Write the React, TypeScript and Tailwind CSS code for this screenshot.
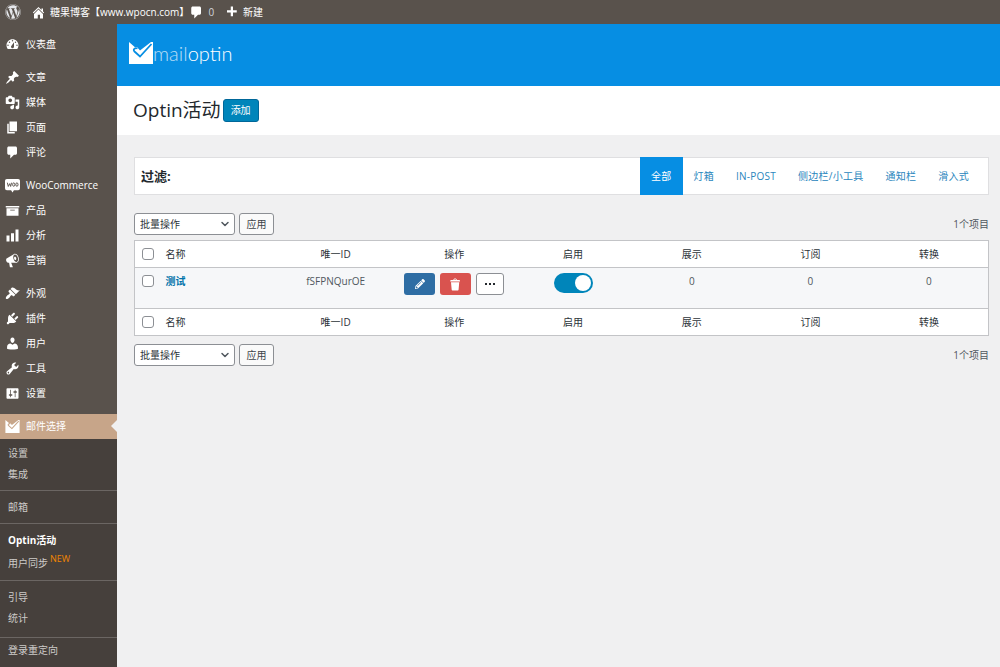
import { FaPencilAlt, FaWordpress } from 'react-icons/fa';
import { ChevronDown } from 'lucide-react';

const icons = {
  home: 'M16 8.5l1.53 1.53-1.06 1.06L10 4.6l-6.47 6.49-1.06-1.06L10 2.5l4 4v-2h2v4zm-6-2.46l6 5.99V18H12v-5H9v5H4v-5.97z',
  comments: 'M5 2h9c1.1 0 2 .9 2 2v7c0 1.1-.9 2-2 2h-2l-5 5v-5H5c-1.1 0-2-.9-2-2V4c0-1.1.9-2 2-2z',
  plus: 'M17 7v3h-5v5H9v-5H4V7h5V2h3v5h5z',
  dashboard:
    'M3.76 16h12.48c1.1-1.37 1.76-3.11 1.76-5 0-4.42-3.58-8-8-8s-8 3.58-8 8c0 1.89.66 3.63 1.76 5zM10 4c.55 0 1 .45 1 1s-.45 1-1 1-1-.45-1-1 .45-1 1-1zM6 6c.55 0 1 .45 1 1s-.45 1-1 1-1-.45-1-1 .45-1 1-1zm8 0c.55 0 1 .45 1 1s-.45 1-1 1-1-.45-1-1 .45-1 1-1zm-5.37 5.55L12 7v6c0 1.1-.9 2-2 2s-2-.9-2-2c0-.57.24-1.08.63-1.45zM4 10c.55 0 1 .45 1 1s-.45 1-1 1-1-.45-1-1 .45-1 1-1zm12 0c.55 0 1 .45 1 1s-.45 1-1 1-1-.45-1-1 .45-1 1-1z',
  post: 'M10.44 3.02l1.82-1.82 6.36 6.35-1.83 1.82c-1.05-.68-2.48-.57-3.41.36l-.75.75c-.92.93-1.04 2.35-.35 3.41l-1.83 1.82-2.41-2.41-2.8 2.79c-.42.42-3.38 2.71-3.8 2.29s1.86-3.39 2.28-3.81l2.79-2.79L4.1 9.36l1.83-1.82c1.05.69 2.48.57 3.4-.36l.75-.75c.93-.92 1.05-2.35.36-3.41z',
  media:
    'M13 11V4c0-.55-.45-1-1-1h-1.67L9 1H5L3.67 3H2c-.55 0-1 .45-1 1v7c0 .55.45 1 1 1h10c.55 0 1-.45 1-1zM7 4.5c1.38 0 2.5 1.12 2.5 2.5S8.38 9.5 7 9.5 4.5 8.38 4.5 7 5.62 4.5 7 4.5zM14 6h5v10.5c0 1.38-1.12 2.5-2.5 2.5S14 17.88 14 16.5s1.12-2.5 2.5-2.5c.17 0 .34.02.5.05V9h-3V6zm-4 8.05V13h2v3.5c0 1.38-1.12 2.5-2.5 2.5S7 17.88 7 16.5 8.12 14 9.5 14c.17 0 .34.02.5.05z',
  page: 'M6 15V2h10v13H6zm-1 1h8v2H3V5h2v11z',
  archive: 'M19 4v2H1V4h18zM2 7h16v10H2V7zm11 3V9H7v1h6z',
  chart: 'M18 18V2h-4v16h4zm-6 0V7H8v11h4zm-6 0v-8H2v8h4z',
  megaphone:
    'M18.15 5.94c.46 1.62.38 3.22-.02 4.48-.42 1.28-1.26 2.18-2.3 2.48-.16.06-.26.06-.4.06-.06.02-.12.02-.18.02-.06.02-.14.02-.22.02h-6.8l2.22 5.5c.02.14-.06.26-.14.34-.08.1-.24.16-.34.16H6.95c-.1 0-.26-.06-.34-.16-.08-.08-.16-.2-.14-.34l-1-5.5H4.25l-.02-.02c-.5.06-1.08-.18-1.54-.62s-.88-1.08-1.06-1.88c-.24-.8-.2-1.56-.02-2.2.18-.62.58-1.08 1.06-1.3l.02-.02 9-5.4c.1-.06.18-.1.24-.16.06-.04.14-.08.24-.12.16-.08.28-.12.5-.18 1.04-.3 2.24.1 3.22.98s1.84 2.24 2.26 3.86zm-2.58 5.98h-.02c.4-.1.74-.34 1.04-.7.58-.7.86-1.76.86-3.04 0-.64-.1-1.3-.28-1.98-.34-1.36-1.02-2.5-1.78-3.24s-1.68-1.1-2.46-.88c-.82.22-1.4.96-1.7 2-.32 1.04-.28 2.36.06 3.72.38 1.36 1 2.5 1.8 3.24.78.74 1.62 1.1 2.48.88zm-2.54-7.08c.22-.04.42-.02.62.04.38.16.76.48 1.02 1s.42 1.2.42 1.78c0 .3-.04.56-.12.8-.18.48-.44.84-.86.94-.34.1-.8-.06-1.14-.4s-.64-.86-.78-1.5c-.18-.62-.12-1.24.02-1.72s.48-.84.82-.94z',
  appearance:
    'M14.48 11.06L7.41 3.99l1.5-1.5c.5-.56 2.3-.47 3.51.32 1.21.8 1.43 1.28 2.91 2.1 1.18.64 2.45 1.26 4.45.85zm-.71.71L6.7 4.7 4.93 6.47c-.39.39-.39 1.02 0 1.41l1.06 1.06c.39.39.39 1.03 0 1.42-.6.6-1.43 1.11-2.21 1.69-.35.26-.7.53-1.01.84C1.43 14.23.4 16.08 1.4 17.07c.99 1 2.84-.03 4.18-1.36.31-.31.58-.66.85-1.02.57-.78 1.08-1.61 1.69-2.21.39-.39 1.02-.39 1.41 0l1.06 1.06c.39.39 1.02.39 1.41 0z',
  plugins:
    'M13.11 4.36L9.87 7.6 8 5.73l3.24-3.24c.35-.34 1.05-.2 1.56.32.52.51.66 1.21.31 1.55zm-8 1.77l.91-1.12 9.01 9.01-1.19.84c-.71.71-2.63 1.16-3.82 1.16H6.14L4.9 17.26c-.59.59-1.54.59-2.12 0-.59-.58-.59-1.53 0-2.12l1.24-1.24v-3.88c0-1.13.4-3.19 1.09-3.89zm7.26 3.97l3.24-3.24c.34-.35 1.04-.21 1.55.31.52.51.66 1.21.31 1.55l-3.24 3.25z',
  users:
    'M10 9.25c-2.27 0-2.73-3.44-2.73-3.44C7 4.02 7.82 2 9.97 2c2.16 0 2.98 2.02 2.71 3.81 0 0-.41 3.44-2.68 3.44zm0 2.57L12.72 10c2.39 0 4.52 2.33 4.52 4.53v2.49s-3.65 1.13-7.24 1.13c-3.65 0-7.24-1.13-7.24-1.13v-2.49c0-2.25 1.94-4.48 4.47-4.48z',
  tools:
    'M16.68 9.77c-1.34 1.34-3.3 1.67-4.95.99l-5.41 6.52c-.99.99-2.59.99-3.58 0s-.99-2.59 0-3.57l6.52-5.42c-.68-1.65-.35-3.61.99-4.95 1.28-1.28 3.12-1.62 4.72-1.06l-2.89 2.89 2.82 2.82 2.86-2.87c.53 1.58.18 3.39-1.08 4.65zM3.81 16.21c.4.39 1.04.39 1.43 0 .4-.4.4-1.04 0-1.43-.39-.4-1.03-.4-1.43 0-.39.39-.39 1.03 0 1.43z',
  settings:
    'M18 16V4c0-.55-.45-1-1-1H3c-.55 0-1 .45-1 1v12c0 .55.45 1 1 1h14c.55 0 1-.45 1-1zM8 11h1c.55 0 1 .45 1 1s-.45 1-1 1H8v1.5c0 .28-.22.5-.5.5s-.5-.22-.5-.5V13H6c-.55 0-1-.45-1-1s.45-1 1-1h1V5.5c0-.28.22-.5.5-.5s.5.22.5.5V11zm5-2h-1c-.55 0-1-.45-1-1s.45-1 1-1h1V5.5c0-.28.22-.5.5-.5s.5.22.5.5V7h1c.55 0 1 .45 1 1s-.45 1-1 1h-1v5.5c0 .28-.22.5-.5.5s-.5-.22-.5-.5V9z',
  trash:
    'M12 4h3c.6 0 1 .4 1 1v1H3V5c0-.6.5-1 1-1h3c.2-1.1 1.3-2 2.5-2s2.3.9 2.5 2zM8 4h3c-.2-.6-.9-1-1.5-1S8.2 3.4 8 4zM4 7h11l-.9 10.1c0 .5-.5.9-1 .9H5.9c-.5 0-.9-.4-1-.9L4 7z',
};

type IconName = keyof typeof icons;

function Icon({ name, className = 'w-[15px] h-[15px]' }: { name: IconName; className?: string }) {
  return (
    <svg viewBox="0 0 20 20" fill="currentColor" className={`shrink-0 ${className}`} aria-hidden="true">
      <path d={icons[name]} />
    </svg>
  );
}

// envelope with a check mark cut out of the flap
function MailIcon({ className, check }: { className: string; check: string }) {
  return (
    <svg viewBox="0 0 24 22" className={`shrink-0 ${className}`} aria-hidden="true">
      <path fill="currentColor" d="M0 0L6 5.200 8 5l3 3.500L22 0h2v22H0z" />
      <path fill="none" stroke={check} strokeWidth="1.800" d="M8.500 6.500C6 5.500 3.500 7.500 5.500 9.500L11 14.500 22.500 2" />
    </svg>
  );
}

function WooIcon() {
  return (
    <svg viewBox="0 0 16 16" className="w-[15px] h-[15px] shrink-0" aria-hidden="true">
      <path fill="currentColor" d="M2 1h12a2 2 0 0 1 2 2v8a2 2 0 0 1-2 2H9.500L8 15.500 6.500 13H2a2 2 0 0 1-2-2V3a2 2 0 0 1 2-2z" />
      <path fill="none" stroke="#59524c" strokeWidth="1" d="M2.500 5l1 4 1.500-3 1 3 1-4" />
      <ellipse cx="9.300" cy="7" rx="1.200" ry="1.800" fill="none" stroke="#59524c" />
      <ellipse cx="12.700" cy="7" rx="1.200" ry="1.800" fill="none" stroke="#59524c" />
    </svg>
  );
}

const menuGroups: { label: string; icon: IconName | 'woo' }[][] = [
  [{ label: '仪表盘', icon: 'dashboard' }],
  [
    { label: '文章', icon: 'post' },
    { label: '媒体', icon: 'media' },
    { label: '页面', icon: 'page' },
    { label: '评论', icon: 'comments' },
  ],
  [
    { label: 'WooCommerce', icon: 'woo' },
    { label: '产品', icon: 'archive' },
    { label: '分析', icon: 'chart' },
    { label: '营销', icon: 'megaphone' },
  ],
  [
    { label: '外观', icon: 'appearance' },
    { label: '插件', icon: 'plugins' },
    { label: '用户', icon: 'users' },
    { label: '工具', icon: 'tools' },
    { label: '设置', icon: 'settings' },
  ],
];

const submenuGroups = [['设置', '集成'], ['邮箱'], ['Optin活动', '用户同步'], ['引导', '统计'], ['登录重定向']];

const filters = ['全部', '灯箱', 'IN-POST', '侧边栏/小工具', '通知栏', '滑入式'];

const columns = ['唯一ID', '操作', '启用', '展示', '订阅', '转换'];

function AdminBar() {
  return (
    <header className="flex items-center h-6 pl-[5px] bg-[#59524c] text-white text-[10px]">
      <a href="#wp" aria-label="WordPress" className="mr-[10px]">
        <FaWordpress className="w-4 h-4 text-gray-200" />
      </a>
      <a href="#site" className="flex items-center gap-1">
        <Icon name="home" />
        糖果博客【www.wpocn.com】
      </a>
      <a href="#comments" className="flex items-center gap-1 mr-[10px]">
        <Icon name="comments" />
        <span className="text-gray-300">0</span>
      </a>
      <a href="#new" className="flex items-center gap-1">
        <Icon name="plus" />
        新建
      </a>
    </header>
  );
}

function Sidebar() {
  return (
    <nav className="w-[117px] shrink-0 flex flex-col bg-[#59524c] text-white text-[10px] pt-2">
      {menuGroups.map((group, i) => (
        <ul key={i} className="mb-2">
          {group.map((item) => (
            <li key={item.label}>
              <a href="#menu" className="flex items-center gap-[6px] h-[25px] pl-[5px]">
                {item.icon === 'woo' ? <WooIcon /> : <Icon name={item.icon} />}
                {item.label}
              </a>
            </li>
          ))}
        </ul>
      ))}
      <a href="#mailoptin" className="relative flex items-center gap-[6px] h-[25px] pl-[5px] bg-[#c7a589]">
        <MailIcon className="w-[15px] h-[13px]" check="#c7a589" />
        邮件选择
        <span className="absolute right-0 top-[6px] border-y-6 border-r-6 border-y-transparent border-r-[#f0f0f1]" />
      </a>
      <div className="flex-1 bg-[#46403c] text-[#cdcbc9] pt-1">
        {submenuGroups.map((group, i) => (
          <ul key={i} className="pb-[5px] not-first:pt-[6px] not-first:border-t border-[#6b6663] last:mt-[3px] last:pt-[2px]">
            {group.map((label) => (
              <li key={label}>
                <a
                  href="#submenu"
                  className={`flex items-center pl-2 ${label === 'Optin活动' ? 'font-bold text-white' : ''} ${label === '用户同步' ? 'h-6' : 'h-[21px]'}`}
                >
                  {label}
                  {label === '用户同步' && <sup className="ml-[2px] text-[9px] text-[#f18500]">NEW</sup>}
                </a>
              </li>
            ))}
          </ul>
        ))}
      </div>
    </nav>
  );
}

function BulkActions() {
  return (
    <div className="flex items-center gap-1 text-[10px]">
      <div className="relative">
        <select
          aria-label="选择批量操作"
          className="appearance-none w-[101px] h-[22px] pl-[5px] border border-[#8c8f94] rounded-[3px] bg-white text-[#2c3338]"
        >
          <option>批量操作</option>
          <option>删除</option>
        </select>
        <ChevronDown className="absolute right-1 top-[5px] w-3 h-3 text-[#50575e] stroke-3 pointer-events-none" />
      </div>
      <button type="button" className="w-[35px] h-[22px] border border-[#8c8f94] rounded-[3px] bg-[#fafafa] text-[#3c434a]">
        应用
      </button>
      <span className="ml-auto text-[#50575e]">1个项目</span>
    </div>
  );
}

function Checkbox({ label }: { label: string }) {
  return (
    <input
      type="checkbox"
      aria-label={label}
      className="appearance-none block w-3 h-3 mx-auto border border-[#8c8f94] rounded-[3px] bg-white"
    />
  );
}

function HeadingRow() {
  return (
    <tr className="h-[27px] bg-white text-[#2c3338]">
      <th className="w-[27px]">
        <Checkbox label="全选" />
      </th>
      <th className="font-normal text-left pl-1">名称</th>
      {columns.map((column) => (
        <th key={column} className="w-[13.9%] font-normal">
          {column}
        </th>
      ))}
    </tr>
  );
}

function CampaignTable() {
  return (
    <table className="w-full table-fixed border border-[#c3c4c7] text-[10px] text-center">
      <thead className="border-b border-[#c3c4c7]">
        <HeadingRow />
      </thead>
      <tbody>
        <tr className="h-[41px] align-top bg-[#f6f7f9] text-[#50575e]">
          <td className="pt-[7px]">
            <Checkbox label="选择 测试" />
          </td>
          <td className="pt-[6px] pl-1 text-left">
            <a href="#campaign" className="font-bold text-[#0073aa]">
              测试
            </a>
          </td>
          <td className="pt-[6px]">fSFPNQurOE</td>
          <td className="pt-[5px]">
            <div className="flex justify-center gap-[5px]">
              <button type="button" aria-label="编辑" className="w-[31px] h-[22px] grid place-items-center rounded-[3px] bg-[#2e6da4] text-white">
                <FaPencilAlt className="w-[10px] h-[10px]" />
              </button>
              <button type="button" aria-label="删除" className="w-[31px] h-[22px] grid place-items-center rounded-[3px] bg-[#d9534f] text-white">
                <Icon name="trash" />
              </button>
              <button type="button" aria-label="更多" className="w-7 h-[22px] flex items-center justify-center gap-[2px] border border-[#8c8f94] rounded-[3px] bg-white">
                <span className="w-[2px] h-[2px] bg-[#23282d]" />
                <span className="w-[2px] h-[2px] bg-[#23282d]" />
                <span className="w-[2px] h-[2px] bg-[#23282d]" />
              </button>
            </div>
          </td>
          <td className="pt-[5px]">
            <input
              type="checkbox"
              defaultChecked
              aria-label="启用"
              className="appearance-none inline-block w-[39px] h-5 rounded-full bg-[#0085ba] before:block before:size-4 before:m-[2px] before:rounded-full before:bg-white checked:before:ml-[21px]"
            />
          </td>
          <td className="pt-[6px]">0</td>
          <td className="pt-[6px]">0</td>
          <td className="pt-[6px]">0</td>
        </tr>
      </tbody>
      <tfoot className="border-t border-[#c3c4c7]">
        <HeadingRow />
      </tfoot>
    </table>
  );
}

export default function App() {
  return (
    <div className="min-h-screen flex flex-col bg-[#f0f0f1] font-['Open_Sans','Noto_Sans_CJK_SC',sans-serif]">
      <AdminBar />
      <div className="flex flex-1">
        <Sidebar />
        <main className="flex-1 min-w-0">
          <div className="flex items-center h-[62px] pl-3 pb-1 bg-[#068ee3] text-white">
            <MailIcon className="w-6 h-[22px]" check="#068ee3" />
            <span className="text-xl font-[Lato] font-light">
              <span className="opacity-70">mail</span>optin
            </span>
          </div>
          <div className="flex items-center gap-[2px] h-[49px] pl-4 bg-white">
            <h1 className="text-[19px] text-[#23282d]">Optin活动</h1>
            <button type="button" className="h-[23px] px-[7px] border border-[#006799] rounded-[3px] bg-[#0085ba] text-white text-[10px]">
              添加
            </button>
          </div>
          <div className="pl-[17px] pr-[11px] pt-[22px]">
            <div className="flex items-center h-[38px] mb-[18px] border border-[#dfdfe1] bg-white">
              <h2 className="pt-[2px] pl-[6px] text-[13px] font-bold text-[#23282d]">过滤:</h2>
              <ul className="ml-auto mr-2 flex text-[10px]">
                {filters.map((filter, i) => (
                  <li key={filter}>
                    <a
                      href="#filter"
                      className={`flex items-center h-[38px] px-[11px] tracking-wide ${i === 0 ? 'bg-[#068ee3] text-white' : 'text-[#2a86bd]'}`}
                    >
                      {filter}
                    </a>
                  </li>
                ))}
              </ul>
            </div>
            <BulkActions />
            <div className="mt-[5px] mb-2">
              <CampaignTable />
            </div>
            <BulkActions />
          </div>
        </main>
      </div>
    </div>
  );
}
